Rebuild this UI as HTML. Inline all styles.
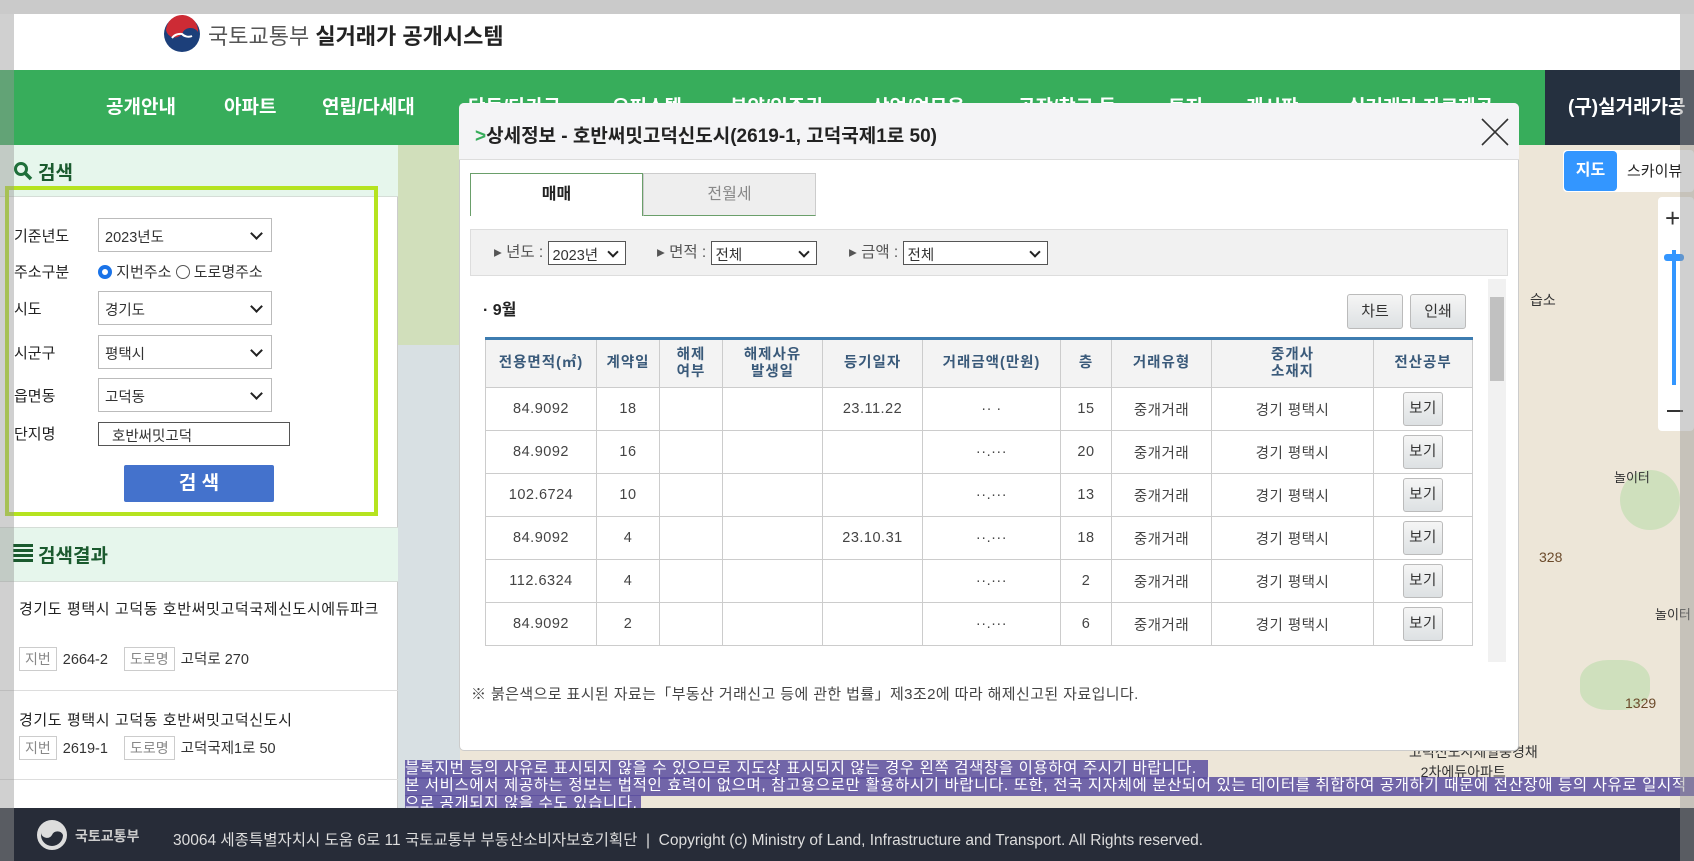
<!DOCTYPE html>
<html style="overflow:hidden"><head><meta charset="utf-8"><style>
*{margin:0;padding:0;box-sizing:border-box}
html,body{width:1694px;height:861px;overflow:hidden}
body{position:relative;background:#ede6d8;font-family:"Liberation Sans","Noto Sans CJK KR",sans-serif;color:#333}
.a{position:absolute}
.nav span{position:absolute;top:92px;color:#fff;font-weight:bold;font-size:19px;white-space:nowrap}
.lbl{position:absolute;left:14px;font-size:15px;color:#222}
.sel{position:absolute;left:98px;width:174px;height:34px;border:1px solid #bbb;background:#fff;font-size:14.5px;padding:7px 6px;color:#333}
.sel:after{content:"";position:absolute;right:10px;top:10px;width:7px;height:7px;border-right:2px solid #222;border-bottom:2px solid #222;transform:rotate(45deg)}
.tag{display:inline-block;border:1px solid #ccc;color:#888;padding:1px 5px;font-size:14px;margin-right:6px}
table{border-collapse:collapse;position:absolute;left:485px;top:337px;width:988px;font-size:14.5px}
th{background:#f3f3f3;color:#3a5a7a;font-weight:bold;height:49px;border:1px solid #ccc;border-top:3px solid #3d7cb0;font-size:14.5px;line-height:17px;letter-spacing:1px}
td{height:43px;border:1px solid #ccc;text-align:center;color:#444;background:#fff;letter-spacing:.5px}
.btn{display:inline-block;width:40px;height:34px;border:1px solid #bbb;border-radius:3px;background:linear-gradient(#f5f5f5,#dde1e3);line-height:32px;color:#333}
.pl{position:absolute;left:405px;background:rgba(90,78,160,.85);color:#fff;font-size:15.5px;letter-spacing:.6px;height:19px;line-height:18px;white-space:nowrap;overflow:hidden}
.fs{display:inline-block;height:24px;border:1px solid #555;background:#fff;color:#333;padding:2px 4px;vertical-align:middle;position:relative;font-size:14.5px}
.fs:after{content:"";position:absolute;right:8px;top:6px;width:6px;height:6px;border-right:2px solid #222;border-bottom:2px solid #222;transform:rotate(45deg)}
</style></head><body>
<!-- map -->
<div class="a" style="left:398px;top:145px;width:62px;height:663px;background:#d8e0e3"></div>
<div class="a" style="left:398px;top:145px;width:62px;height:200px;background:#d1dfbb"></div>
<div class="a" style="left:1519px;top:145px;width:175px;height:663px;background:#ede6d8"></div>
<div class="a" style="left:1620px;top:470px;width:60px;height:60px;background:#cfe0bd;border-radius:50%"></div>
<div class="a" style="left:1580px;top:660px;width:70px;height:50px;background:#cfe0bd;border-radius:40%"></div>
<div class="a" style="left:1530px;top:290px;font-size:14px;color:#333">습소</div>
<div class="a" style="left:1614px;top:467px;font-size:13px;color:#333">놀이터</div>
<div class="a" style="left:1655px;top:604px;font-size:13px;color:#333">놀이터</div>
<div class="a" style="left:1539px;top:549px;font-size:14px;color:#6b4a2a">328</div>
<div class="a" style="left:1625px;top:695px;font-size:14px;color:#6b4a2a">1329</div>
<div class="a" style="left:1409px;top:742px;font-size:14px;color:#333">고덕신도시제일풍경채<br>&nbsp;&nbsp;&nbsp;2차에듀아파트</div>
<!-- header -->
<div class="a" style="left:0;top:0;width:1694px;height:70px;background:#fff"></div>
<svg class="a" style="left:162px;top:14px" width="40" height="40" viewBox="0 0 40 40"><circle cx="20" cy="20" r="18" fill="#1c3f7a"/><path d="M4 16A16 16 0 0 1 36 18A9 9 0 0 0 20 20A9 9 0 0 1 4 16Z" fill="#cd2b35"/><path d="M10 24A10 10 0 0 1 20 20A9 9 0 0 0 30 22" fill="none" stroke="#fff" stroke-width="2"/></svg>
<div class="a" style="left:208px;top:19px;font-size:22px;white-space:nowrap"><span style="color:#555">국토교통부</span> <b style="color:#222">실거래가 공개시스템</b></div>
<div class="a nav" style="left:0;top:70px;width:1694px;height:75px;background:#37ad5b">
<div class="a" style="left:1545px;top:0;width:149px;height:75px;background:#25303f"></div>
<span style="left:106px;top:22px">공개안내</span><span style="left:224px;top:22px">아파트</span><span style="left:322px;top:22px">연립/다세대</span><span style="left:468px;top:22px">단독/다가구</span><span style="left:612px;top:22px">오피스텔</span><span style="left:730px;top:22px">분양/입주권</span><span style="left:872px;top:22px">상업/업무용</span><span style="left:1018px;top:22px">공장/창고 등</span><span style="left:1168px;top:22px">토지</span><span style="left:1246px;top:22px">게시판</span><span style="left:1348px;top:22px">실거래가 자료제공</span><span style="left:1568px;top:22px">(구)실거래가공</span>
</div>
<!-- left panel -->
<div class="a" style="left:0;top:145px;width:398px;height:663px;background:#fff;border-right:1px solid #ccc"></div>
<div class="a" style="left:0;top:145px;width:398px;height:52px;background:#e6f6ec;border-bottom:1px solid #d5ddd7"></div>
<svg class="a" style="left:13px;top:161px" width="20" height="20"><circle cx="8" cy="8" r="5.5" fill="none" stroke="#1f6f3a" stroke-width="3"/><path d="M12 12L18 18" stroke="#1f6f3a" stroke-width="3.5"/></svg>
<div class="a" style="left:38px;top:158px;font-size:19px;font-weight:bold;color:#1a5a2e">검색</div>
<div class="a" style="left:5px;top:186px;width:373px;height:330px;border:4px solid #b5e31f"></div>
<div class="lbl" style="top:225px">기준년도</div><div class="sel" style="top:218px">2023년도</div>
<div class="lbl" style="top:261px">주소구분</div>
<div class="a" style="left:98px;top:261px;font-size:15px;white-space:nowrap"><span style="display:inline-block;width:14px;height:14px;border-radius:50%;border:4px solid #1a73e8;vertical-align:-2px"></span> 지번주소 <span style="display:inline-block;width:14px;height:14px;border-radius:50%;border:1px solid #555;vertical-align:-2px"></span> 도로명주소</div>
<div class="lbl" style="top:298px">시도</div><div class="sel" style="top:291px">경기도</div>
<div class="lbl" style="top:342px">시군구</div><div class="sel" style="top:335px">평택시</div>
<div class="lbl" style="top:385px">읍면동</div><div class="sel" style="top:378px">고덕동</div>
<div class="lbl" style="top:423px">단지명</div>
<div class="a" style="left:98px;top:422px;width:192px;height:24px;border:1px solid #555;font-size:14.5px;padding:2px 13px">호반써밋고덕</div>
<div class="a" style="left:124px;top:465px;width:150px;height:37px;background:#4472cc;border-radius:2px;color:#fff;font-weight:bold;font-size:19px;text-align:center;line-height:37px">검 색</div>
<div class="a" style="left:0;top:527px;width:398px;height:55px;background:#e6f6ec;border-top:1px solid #d5ddd7;border-bottom:1px solid #d5ddd7"></div>
<div class="a" style="left:13px;top:544px;width:20px;height:20px;background:repeating-linear-gradient(#1a5a2e 0 3px,transparent 3px 5px)"></div>
<div class="a" style="left:38px;top:541px;font-size:19px;font-weight:bold;color:#1a5a2e">검색결과</div>
<div class="a" style="left:19px;top:600px;width:362px;font-size:15px;letter-spacing:.6px;line-height:20px;color:#222">경기도 평택시 고덕동 호반써밋고덕국제신도시에듀파크</div>
<div class="a" style="left:19px;top:647px;font-size:14.5px;white-space:nowrap"><span class="tag">지번</span>2664-2 &nbsp;&nbsp;&nbsp;<span class="tag">도로명</span>고덕로 270</div>
<div class="a" style="left:0;top:690px;width:398px;border-top:1px solid #ddd"></div>
<div class="a" style="left:19px;top:709px;font-size:15px;letter-spacing:.6px;color:#222;white-space:nowrap">경기도 평택시 고덕동 호반써밋고덕신도시</div>
<div class="a" style="left:19px;top:736px;font-size:14.5px;white-space:nowrap"><span class="tag">지번</span>2619-1 &nbsp;&nbsp;&nbsp;<span class="tag">도로명</span>고덕국제1로 50</div>
<div class="a" style="left:0;top:779px;width:398px;border-top:1px solid #ddd"></div>
<!-- modal -->
<div class="a" style="left:459px;top:103px;width:1060px;height:648px;background:#fff;border:1px solid #ccc;border-radius:5px"></div>
<div class="a" style="left:459px;top:103px;width:1060px;height:57px;background:#f4f4f6;border-bottom:1px solid #ddd;border-radius:5px 5px 0 0"></div>
<div class="a" style="left:475px;top:121px;font-size:19px;font-weight:bold;color:#222;white-space:nowrap"><span style="color:#37ad5b">&gt;</span>상세정보 - 호반써밋고덕신도시(2619-1, 고덕국제1로 50)</div>
<svg class="a" style="left:1480px;top:117px" width="30" height="30"><path d="M2 2L28 28M28 2L2 28" stroke="#333" stroke-width="1.6"/></svg>
<div class="a" style="left:470px;top:173px;width:173px;height:43px;border:1px solid #6a9f6a;border-bottom:none;text-align:center;line-height:42px;font-size:16px;font-weight:bold;color:#222">매매</div>
<div class="a" style="left:643px;top:173px;width:173px;height:43px;background:#eee;border:1px solid #ccc;border-bottom:1px solid #6a9f6a;text-align:center;line-height:42px;font-size:16px;color:#888">전월세</div>
<div class="a" style="left:470px;top:229px;width:1038px;height:47px;background:#f1f1f1;border:1px solid #ddd"></div>
<div class="a" style="left:494px;top:240px;font-size:15.5px;color:#555;white-space:nowrap">▸ 년도 : <span class="fs" style="width:78px">2023년</span></div>
<div class="a" style="left:657px;top:240px;font-size:15.5px;color:#555;white-space:nowrap">▸ 면적 : <span class="fs" style="width:106px">전체</span></div>
<div class="a" style="left:849px;top:240px;font-size:15.5px;color:#555;white-space:nowrap">▸ 금액 : <span class="fs" style="width:145px">전체</span></div>
<div class="a" style="left:483px;top:296px;font-size:16px;font-weight:bold;color:#222">· 9월</div>
<div class="a btn" style="left:1347px;top:294px;width:56px;height:35px;line-height:33px;text-align:center;font-size:15px">차트</div>
<div class="a btn" style="left:1410px;top:294px;width:56px;height:35px;line-height:33px;text-align:center;font-size:15px">인쇄</div>
<div class="a" style="left:1488px;top:279px;width:18px;height:383px;background:#f1f1f1"></div>
<div class="a" style="left:1490px;top:297px;width:14px;height:84px;background:#c1c1c1"></div>
<table><tr><th style="width:111px">전용면적(㎡)</th><th style="width:63px">계약일</th><th style="width:63px">해제<br>여부</th><th style="width:100px">해제사유<br>발생일</th><th style="width:100px">등기일자</th><th style="width:138px">거래금액(만원)</th><th style="width:51px">층</th><th style="width:100px">거래유형</th><th style="width:162px">중개사<br>소재지</th><th>전산공부</th></tr>
<tr><td>84.9092</td><td>18</td><td></td><td></td><td>23.11.22</td><td>·· ·</td><td>15</td><td>중개거래</td><td>경기 평택시</td><td><span class="btn">보기</span></td></tr>
<tr><td>84.9092</td><td>16</td><td></td><td></td><td></td><td>··.···</td><td>20</td><td>중개거래</td><td>경기 평택시</td><td><span class="btn">보기</span></td></tr>
<tr><td>102.6724</td><td>10</td><td></td><td></td><td></td><td>··.···</td><td>13</td><td>중개거래</td><td>경기 평택시</td><td><span class="btn">보기</span></td></tr>
<tr><td>84.9092</td><td>4</td><td></td><td></td><td>23.10.31</td><td>··.···</td><td>18</td><td>중개거래</td><td>경기 평택시</td><td><span class="btn">보기</span></td></tr>
<tr><td>112.6324</td><td>4</td><td></td><td></td><td></td><td>··.···</td><td>2</td><td>중개거래</td><td>경기 평택시</td><td><span class="btn">보기</span></td></tr>
<tr><td>84.9092</td><td>2</td><td></td><td></td><td></td><td>··.···</td><td>6</td><td>중개거래</td><td>경기 평택시</td><td><span class="btn">보기</span></td></tr></table>
<div class="a" style="left:471px;top:683px;font-size:15px;letter-spacing:.4px;color:#444;white-space:nowrap">※ 붉은색으로 표시된 자료는「부동산 거래신고 등에 관한 법률」제3조2에 따라 해제신고된 자료입니다.</div>
<!-- map controls -->
<div class="a" style="left:1563px;top:150px;width:131px;height:42px;background:#fff;border-radius:4px"></div>
<div class="a" style="left:1564px;top:151px;width:53px;height:40px;background:#3396ff;border-radius:4px;color:#fff;font-size:16px;font-weight:bold;text-align:center;line-height:40px">지도</div>
<div class="a" style="left:1627px;top:160px;font-size:15px;color:#222">스카이뷰</div>
<div class="a" style="left:1658px;top:197px;width:36px;height:234px;background:#fff;border-radius:4px"></div>
<div class="a" style="left:1665px;top:203px;font-size:26px;color:#333">+</div>
<div class="a" style="left:1672px;top:250px;width:4px;height:135px;background:#3396ff"></div>
<div class="a" style="left:1664px;top:254px;width:20px;height:7px;background:#3396ff;border-radius:3px"></div>
<div class="a" style="left:1667px;top:410px;width:16px;height:2px;background:#333"></div>
<!-- notice lines -->
<div class="pl" style="top:760px;width:803px">블록지번 등의 사유로 표시되지 않을 수 있으므로 지도상 표시되지 않는 경우 왼쪽 검색창을 이용하여 주시기 바랍니다.</div>
<div class="pl" style="top:777px;width:1289px">본 서비스에서 제공하는 정보는 법적인 효력이 없으며, 참고용으로만 활용하시기 바랍니다. 또한, 전국 지자체에 분산되어 있는 데이터를 취합하여 공개하기 때문에 전산장애 등의 사유로 일시적</div>
<div class="pl" style="top:795px;width:236px">으로 공개되지 않을 수도 있습니다.</div>
<!-- footer -->
<div class="a" style="left:0;top:808px;width:1694px;height:53px;background:#272c38"></div>
<svg class="a" style="left:37px;top:820px" width="30" height="30"><circle cx="15" cy="15" r="13" fill="none" stroke="#ddd" stroke-width="4"/><path d="M4 13A11 11 0 0 1 26 15A6 6 0 0 0 15 15A6 6 0 0 1 4 13Z" fill="#ddd"/></svg>
<div class="a" style="left:75px;top:826px;font-size:14px;font-weight:bold;color:#ccc">국토교통부</div>
<div class="a" style="left:173px;top:828px;font-size:15.5px;color:#ddd;white-space:nowrap">30064 세종특별자치시 도움 6로 11 국토교통부 부동산소비자보호기획단 &nbsp;|&nbsp; Copyright (c) Ministry of Land, Infrastructure and Transport. All Rights reserved.</div>
<!-- gray frame overlay -->
<div class="a" style="left:0;top:0;width:1694px;height:14px;background:rgba(180,180,180,.7)"></div>
<div class="a" style="left:0;top:14px;width:14px;height:847px;background:rgba(150,150,150,.45)"></div>
<div class="a" style="left:1680px;top:14px;width:14px;height:847px;background:rgba(150,150,150,.45)"></div>
</body></html>
